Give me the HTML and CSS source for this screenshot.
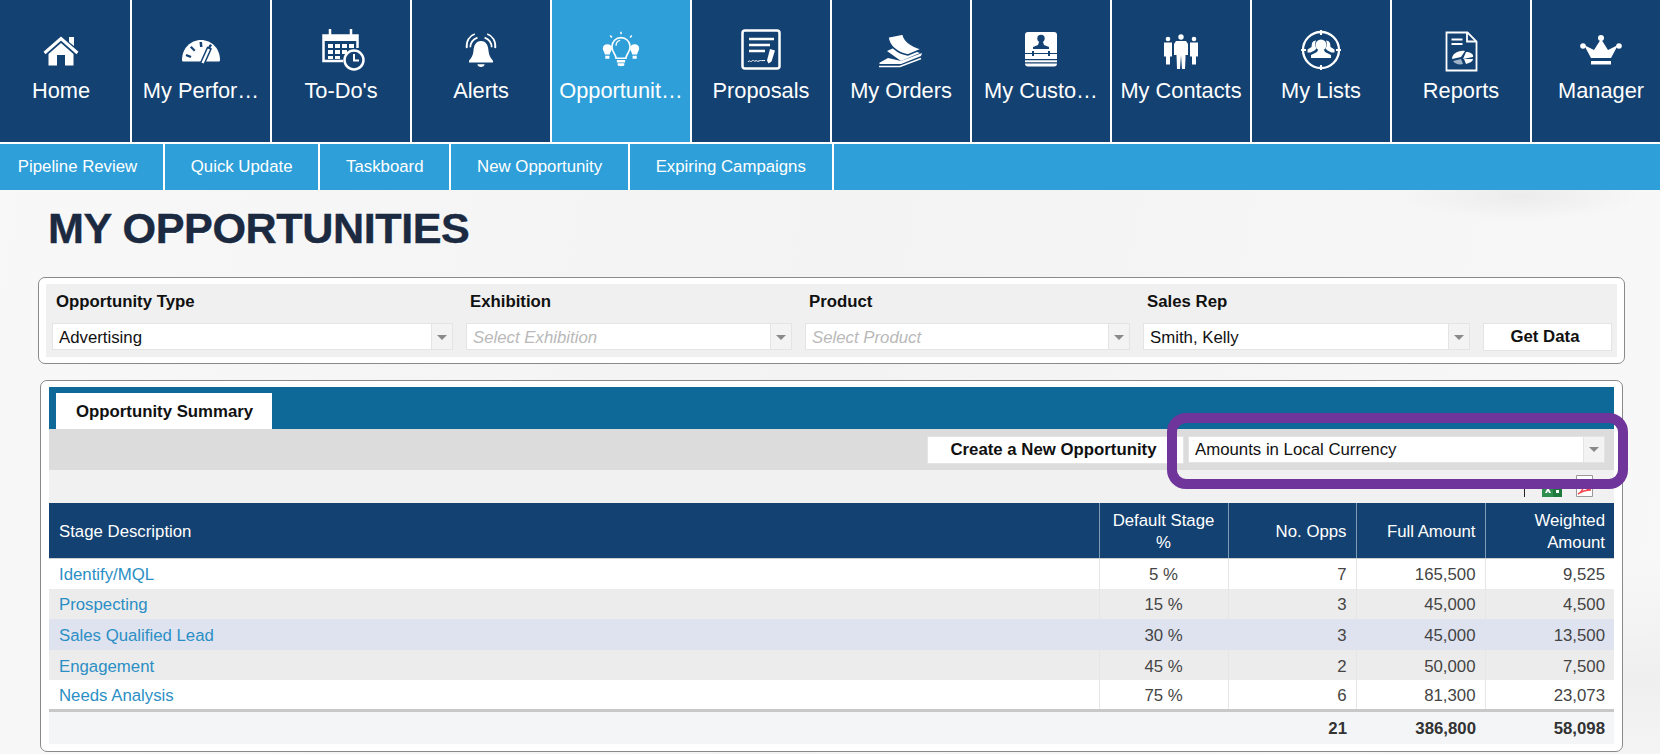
FILE: index.html
```html
<!DOCTYPE html>
<html lang="en">
<head>
<meta charset="utf-8">
<title>My Opportunities</title>
<link rel="stylesheet" href="styles.css">
</head>
<body>
<nav class="topnav">
  <a class="navitem"><svg class="navicon" viewBox="0 0 48 48"><path class="fw" d="M32 11h5v9l-5-4z"/><path class="ln" d="M7.500 27 24 12.500 40.500 27" stroke-width="3"/><path class="fw" d="M11.500 28 24 17l12.500 11v11.500h-8.500V29h-8v10.500h-8.500z"/></svg><span class="navlabel">Home</span></a>
  <a class="navitem"><svg class="navicon" viewBox="0 0 48 48"><path class="fw" d="M5 34c0-11 8-20 19-20s19 9 19 20c0 1-.5 1.500-1.500 1.500H6.500C5.500 35.500 5 35 5 34z"/><path class="dk" d="M9.500 28l5 2-1 2-5-2zM14.500 20l4 4-1.500 1.500-4-4zM22.500 16h2.500l.5 5h-2.500zM33 18l2 1.200-2.500 4-2-1.200z"/><path class="fw" d="M34 23 27 38.500l-3.500-1.500 7-15.500z" stroke="#134171" stroke-width="1.500"/></svg><span class="navlabel">My Perfor…</span></a>
  <a class="navitem"><svg class="navicon" viewBox="0 0 48 48"><path class="ln" d="M26 35H6.500V9.500h34V22" stroke-width="2.500"/><path class="fw" d="M6 9.500h35V15H6z"/><path class="ln" d="M13 3v9M34 3v9" stroke-width="2.500"/><path class="fw" d="M11 18h5v4h-5zM18 18h5v4h-5zM25 18h5v4h-5zM32 18h5v4h-5zM11 24h5v4h-5zM18 24h5v4h-5zM25 24h5v4h-5zM11 30h5v3h-5zM18 30h5v3h-5z"/><circle class="ln bgc" cx="37" cy="34" r="9.500" stroke-width="2.500"/><path class="ln" d="M37 28v6.500h5" stroke-width="2"/></svg><span class="navlabel">To-Do's</span></a>
  <a class="navitem"><svg class="navicon" viewBox="-3 -5 54 54"><path class="fw" d="M24 12c6 0 8 5 8.500 11 .3 5 2.500 8 5 11v2h-27v-2c2.500-3 4.700-6 5-11 .5-6 2.500-11 8.500-11zM20 38h8c0 2-2 3-4 3s-4-1-4-3z"/><path class="ln" d="M12 19c0-5 3-9 8-11M36 19c0-5-3-9-8-11M8 20C7 12 11 6 17 4M40 20c1-8-3-14-9-16" stroke-width="2"/></svg><span class="navlabel">Alerts</span></a>
  <a class="navitem navitem-on"><svg class="navicon" viewBox="-5 -5 58 58"><path class="ln" d="M18 34c0-5-5-7-5-14a11 11 0 0 1 22 0c0 7-5 9-5 14z" stroke-width="2"/><path class="ln" d="M24 5v-3M13 9l-2-2.500M35 9l2-2.500" stroke-width="1.800"/><path class="fw" d="M19 36h10v3h-10zM20 40h8v2.500c-1 1.500-7 1.500-8 0z"/><path class="fw" d="M7.500 17c3.500 0 5.500 2.500 5.500 5 0 3-2 4-2.500 7.500h-6C4 26 2 25 2 22c0-2.500 2-5 5.500-5zM40.500 17c3.500 0 5.500 2.500 5.500 5 0 3-2 4-2.500 7.500h-6C37 26 35 25 35 22c0-2.500 2-5 5.500-5zM5 31h5v3.500H5zM38 31h5v3.500h-5z"/><path class="ln" d="M18 19c0-3 2-6 5-6.500" stroke-width="1.500"/></svg><span class="navlabel">Opportunit…</span></a>
  <a class="navitem"><svg class="navicon" viewBox="0 0 48 48"><rect class="ln" x="5.500" y="4.500" width="37" height="38" rx="2.500" stroke-width="2.500"/><path class="ln" d="M12 13h25M12 19h21M12 25h16" stroke-width="2.500"/><path class="fw" d="M33 23l5 1.500-3.500 11-3 2-1.500-3z"/><path class="ln" d="M11 36c2-3 2 1 4-1s1 1 3 0 2 1 4 0 3 0 6-.5" stroke-width="1"/></svg><span class="navlabel">Proposals</span></a>
  <a class="navitem"><svg class="navicon" viewBox="0 0 48 48"><path class="fw" d="M10 25l9-4 5 6 16-1 3 1-19 8z"/><path class="fw" d="M2 37l9-5 13 3 21-8-1 3-20 8H3z"/><path class="ln" d="M2 40.500h21l21-8" stroke-width="1.500"/><path class="fw" d="M11 11 26 8c1 6 7 12 19 15l-14 6C20 27 12 20 11 11z" stroke="#134171" stroke-width="1.500"/></svg><span class="navlabel">My Orders</span></a>
  <a class="navitem"><svg class="navicon" viewBox="0 0 48 48"><path class="fw" d="M11 6h26c2 0 3 1 3 3v18H8V9c0-2 1-3 3-3z"/><circle class="dk" cx="24" cy="12.500" r="3.700"/><path class="dk" d="M22 16h4l1 3 5 2v2H16v-2l5-2z"/><path class="fw" d="M8 28h32v5H8zM8 34.200h32v2H8zM8 37.500h32c0 2-1 3-3 3H11c-2 0-3-1-3-3z"/><path class="dk" d="M15 25h2v5h-2zM31 25h2v5h-2z"/></svg><span class="navlabel">My Custo…</span></a>
  <a class="navitem"><svg class="navicon" viewBox="0 0 48 48"><circle class="fw" cx="24" cy="11" r="2.700"/><path class="fw" d="M19 15h10l2 3v11h-2.500v3l-.5 11h-3l-1-14-1 14h-3l-.5-14h-2.500V18z"/><circle class="fw" cx="11" cy="13" r="2.300"/><path class="fw" d="M7 16.500h8v14H13v8h-4v-8H7z"/><circle class="fw" cx="37" cy="13" r="2.300"/><path class="fw" d="M33 16.500h8v14h-2v8h-4v-8h-2z"/></svg><span class="navlabel">My Contacts</span></a>
  <a class="navitem"><svg class="navicon" viewBox="0 0 48 48"><circle class="ln" cx="24" cy="24" r="18" stroke-width="2.300"/><path class="ln" d="M24 4v5M24 39v5M4 24h5M39 24h5" stroke-width="2"/><circle class="fw" cx="24" cy="19" r="5.500"/><path class="fw" d="M21 24h6l1 2 6 3v3H14v-3l6-3z"/><path class="fw" d="M15 17a4 4 0 0 1 4-2.500c-1.500 3-1 6 .5 8l-2 2-4 2h-3v-3l4-2.500zM33 17a4 4 0 0 0-4-2.500c1.500 3 1 6-.5 8l2 2 4 2h3v-3l-4-2.500z"/></svg><span class="navlabel">My Lists</span></a>
  <a class="navitem"><svg class="navicon" viewBox="0 0 48 48"><path class="ln" d="M9.500 6.500h21l9 9v29h-30z" stroke-width="1.800"/><path class="ln" d="M30 6.500v9h9" stroke-width="1.800"/><path class="ln" d="M14.500 13.500h11M14.500 18h11" stroke-width="2"/><path class="fw" d="M15 33c0-5 6-9 13-8l-4 6zM26 33l3-7c4 0 8 2 7 5z"/><path class="fg" d="M16 35l8-2 2 5c-4 1-8 0-10-3z"/><path class="fw" d="M27 33l9 0c0 2-3 4-7 5z"/></svg><span class="navlabel">Reports</span></a>
  <a class="navitem"><svg class="navicon" viewBox="0 0 48 48"><circle class="fw" cx="24" cy="12" r="3"/><circle class="fw" cx="6" cy="20" r="2.800"/><circle class="fw" cx="42" cy="20" r="2.800"/><path class="fw" d="M24 13l7 11 10-5-7 13H14L7 19l10 5z"/><path class="fw" d="M14 35h20v3.500H14z"/></svg><span class="navlabel">Manager</span></a>
</nav>

<div class="subnav">
  <a class="subitem">Pipeline Review</a>
  <a class="subitem">Quick Update</a>
  <a class="subitem">Taskboard</a>
  <a class="subitem">New Opportunity</a>
  <a class="subitem">Expiring Campaigns</a>
</div>

<main class="page">
  <h1 class="title">MY OPPORTUNITIES</h1>

  <section class="filterbox">
    <div class="filtergrid">
      <label class="flabel">Opportunity Type</label>
      <label class="flabel">Exhibition</label>
      <label class="flabel">Product</label>
      <label class="flabel">Sales Rep</label>
      <span></span>
      <div class="select"><span class="selval">Advertising</span><span class="selarrow"></span></div>
      <div class="select"><span class="selval selph">Select Exhibition</span><span class="selarrow"></span></div>
      <div class="select"><span class="selval selph">Select Product</span><span class="selarrow"></span></div>
      <div class="select"><span class="selval">Smith, Kelly</span><span class="selarrow"></span></div>
      <button class="btn btn-get">Get Data</button>
    </div>
  </section>

  <section class="panel">
    <div class="tabbar"><span class="tab">Opportunity Summary</span></div>
    <div class="toolbar">
      <button class="btn btn-new">Create a New Opportunity</button>
      <div class="select select-cur"><span class="selval">Amounts in Local Currency</span><span class="selarrow"></span></div>
    </div>
    <div class="exportrow">
      <span class="exporttick"></span>
      <svg class="exporticon" viewBox="0 0 20 22"><path fill="#2f8f4e" d="M0 6h11v16H0z"/><path fill="#1f7a3d" d="M11 9h9v13h-9z"/><path fill="#fff" d="M14 15h3v3h-3z"/><path fill="#fff" d="M3 10h2l1 2 1-2h2l-2 4 2 4H7l-1-2-1 2H3l2-4z"/></svg>
      <svg class="exporticon exportpdf" viewBox="0 0 17 22"><path fill="#fff" stroke="#999" d="M.5.500h16v21H.5z"/><path fill="none" stroke="#f0454a" stroke-width="1.500" d="M2 19c4-2 6-7 6-11 1 5 3 7 7 7-4 0-9 1-13 4z"/></svg>
    </div>
    <table class="grid">
      <colgroup><col class="col-a"><col class="col-b"><col class="col-c"><col class="col-d"><col class="col-e"></colgroup>
      <thead>
        <tr><th class="left">Stage Description</th><th class="mid">Default Stage %</th><th>No. Opps</th><th>Full Amount</th><th>Weighted Amount</th></tr>
      </thead>
      <tbody>
        <tr><td class="left"><a class="link">Identify/MQL</a></td><td class="mid">5 %</td><td>7</td><td>165,500</td><td>9,525</td></tr>
        <tr class="alt"><td class="left"><a class="link">Prospecting</a></td><td class="mid">15 %</td><td>3</td><td>45,000</td><td>4,500</td></tr>
        <tr class="hi"><td class="left"><a class="link">Sales Qualified Lead</a></td><td class="mid">30 %</td><td>3</td><td>45,000</td><td>13,500</td></tr>
        <tr class="alt"><td class="left"><a class="link">Engagement</a></td><td class="mid">45 %</td><td>2</td><td>50,000</td><td>7,500</td></tr>
        <tr><td class="left"><a class="link">Needs Analysis</a></td><td class="mid">75 %</td><td>6</td><td>81,300</td><td>23,073</td></tr>
      </tbody>
      <tfoot>
        <tr><td></td><td></td><td>21</td><td>386,800</td><td>58,098</td></tr>
      </tfoot>
    </table>
    <div class="callout"></div>
  </section>
</main>
</body>
</html>
```

FILE: styles.css
```css
* { box-sizing: border-box; }
html, body { margin: 0; height: 754px; overflow: hidden; }
body {
  font-family: "Liberation Sans", Arial, sans-serif;
  font-size: 16.8px;
  color: #111;
  background:
    radial-gradient(ellipse 120px 24px at 1520px 196px, #ececec 0, rgba(236,236,236,0) 100%),
    radial-gradient(ellipse 400px 120px at 1640px 680px, #efefef 0, rgba(239,239,239,0) 100%),
    linear-gradient(100deg, #f8f8f8 0, #f3f3f3 50%, #f8f8f8 100%);
}

.topnav { display: flex; margin-left: -8px; width: 1680px; height: 144px; border-bottom: 2.400px solid #fff; background: #fff; }
.navitem { flex: 0 0 140px; height: 142px; padding: 26px 4px 0; background: #134171; border-right: 2.400px solid #fff; color: #fff; text-align: center; }
.navitem-on { background: #2e9fd9; }
.navicon { display: block; width: 48px; height: 48px; margin: 0 auto; }
.navlabel { display: block; margin-top: 4px; font-size: 21.800px; line-height: 26px; white-space: nowrap; overflow: hidden; text-overflow: ellipsis; }
.fw { fill: #fff; }
.fg { fill: #9fb3c8; }
.dk { fill: #134171; }
.ln { fill: none; stroke: #fff; }
.bgc { fill: #134171; }

.subnav { display: flex; margin-left: -8px; height: 46px; background: #2e9fd9; }
.subitem { display: flex; align-items: center; padding: 0 25.800px; border-right: 2.400px solid #fff; color: #fff; line-height: 48px; }

.page { padding-top: 1px; }
.title { margin: 0 0 0 48px; height: 86px; font-size: 43.200px; line-height: 50px; padding-top: 12px; font-weight: 700; letter-spacing: -0.460px; color: #1b2a41; -webkit-text-stroke: 0.400px #1b2a41; text-shadow: 1px 1px 1px #fff; }

.filterbox { margin: 0 35px 0 38px; padding: 6px 7px 7px; height: 87px; background: #fff; border: 1px solid #8a8a8a; border-radius: 7px; }
.filtergrid { display: grid; grid-template-columns: 401px 326px 325px 327px 129px; grid-template-rows: 39px 28px; column-gap: 13px; height: 73px; padding: 0 6px; background: #f0f0f0; }
.flabel { align-self: center; padding: 0 0 4px 4px; font-weight: 700; }

.select { display: flex; height: 27px; background: #fff; border: 1px solid #e4e4e4; line-height: 27px; }
.selval { flex: 1; padding-left: 6px; min-width: 0; white-space: nowrap; }
.selph { color: #b9b9b9; font-style: italic; }
.selarrow { position: relative; flex: 0 0 21px; background: #f3f3f3; border-left: 1px solid #e4e4e4; }
.selarrow::after { content: ""; position: absolute; left: 5px; top: 11px; border: 5px solid transparent; border-top: 5px solid #8a8a8a; border-bottom: 0; }

.btn { height: 28px; padding: 0; background: #fff; border: 1px solid #e4e4e4; font: 700 16.8px "Liberation Sans", Arial, sans-serif; color: #111; }
.btn-get { padding-right: 5px; }

.panel { position: relative; margin: 16px 37px 0 40px; padding: 6px 8px 0; height: 372px; background: #fff; border: 1px solid #8a8a8a; border-radius: 7px; }
.tabbar { height: 42px; padding: 6px 0 0 7px; background: #0e6898; }
.tab { display: block; width: 216px; height: 36px; padding-left: 20px; background: #fff; font-weight: 700; line-height: 38px; }
.toolbar { display: flex; justify-content: flex-end; align-items: center; gap: 4px; height: 41px; padding-right: 9px; background: #dcdcdc; }
.btn-new { width: 257px; padding-right: 4px; }
.select-cur { width: 417px; line-height: 25px; }
.select-cur .selarrow::after { top: 10px; }
.exportrow { display: flex; justify-content: flex-end; align-items: flex-end; height: 33px; padding: 0 21px 6px 0; background: #f1f1f1; }
.exporttick { width: 1px; height: 10px; margin-right: 17px; background: #222; }
.exporticon { display: block; width: 20px; height: 22px; }
.exportpdf { width: 17px; margin-left: 14px; }

.grid { width: 1565px; border-collapse: collapse; table-layout: fixed; color: #444; }
.col-a { width: 1050px; }
.col-b { width: 129px; }
.col-c { width: 128px; }
.col-d { width: 129px; }
.col-e { width: 129px; }
.grid th { height: 55px; padding: 3px 9px 0; background: #134171; color: #fff; font-weight: 400; line-height: 22px; text-align: right; border-left: 1px solid #7f9ab5; border-bottom: 1px solid #cfcfcf; }
.grid td { height: 30.600px; padding: 3px 9px 0; text-align: right; border-left: 1px solid #e6e6e6; background: #fff; }
.grid th:first-child, .grid td:first-child { border-left: 0; }
.grid .left { text-align: left; padding-left: 10px; }
.grid .mid { text-align: center; }
.grid .alt td { background: #ececec; }
.grid .hi td { background: #dfe3ef; border-left-color: #dfe3ef; }
.link { color: #2b8fc5; }
.grid tfoot td { height: 33px; padding-top: 2px; background: #f4f5f7; border-left: 0; border-top: 3px solid #c8c8c8; font-weight: 700; color: #333; }

.callout { position: absolute; left: 1126px; top: 32px; width: 461px; height: 76px; border: 10.500px solid #6f359b; border-radius: 19px; pointer-events: none; }
```
